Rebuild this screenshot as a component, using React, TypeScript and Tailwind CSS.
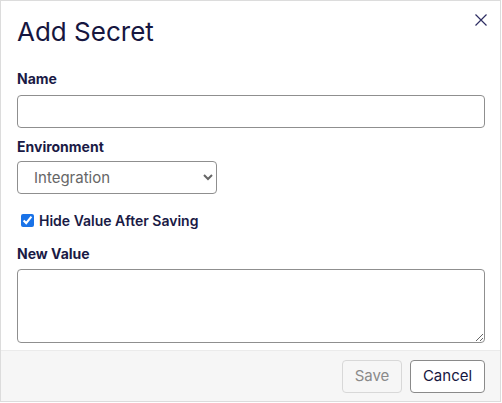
import React from "react";

export default function App() {
  return (
    <div className="w-[502px] h-[403px] bg-white" style={{ fontFamily: "Inter, 'Noto Sans', sans-serif" }}>
      <div className="w-[501px] h-[402px] border border-[#dcdcdc] flex flex-col text-[#1a1a45]">
        <div className="flex-1 px-4 pt-[13px] relative">
          <h1 className="text-[26px] leading-[36px] font-normal text-[#16163f]">Add Secret</h1>
          <button className="absolute right-[13px] top-[13px] w-[12px] h-[12px] text-[#2e2e63]" aria-label="Close">
            <svg width="12" height="12" viewBox="0 0 12 12" fill="none" stroke="currentColor" strokeWidth="1.2">
              <path d="M0.5 0.5 L11.5 11.5 M11.5 0.5 L0.5 11.5" />
            </svg>
          </button>

          <label className="block mt-[19px] text-[14px] leading-[20px] font-bold">Name</label>
          <input className="block mt-[6px] w-[468px] h-[33px] border border-[#8f8f8f] rounded-[4px] px-3 text-[15px] outline-none" />

          <label className="block mt-[9px] text-[14px] leading-[20px] font-bold">Environment</label>
          <select
            defaultValue="Integration"
            className="block mt-[4px] w-[200px] h-[33px] border border-[#8f8f8f] rounded-[4px] pl-[12px] pr-2 text-[15px] text-[#666] bg-white outline-none"
          >
            <option>Integration</option>
          </select>

          <div className="flex items-center mt-[16px] h-[20px]">
            <input type="checkbox" defaultChecked className="ml-[4px] mr-[5px] w-[13px] h-[13px] accent-[#1a73e8]" />
            <span className="text-[14px] font-semibold">Hide Value After Saving</span>
          </div>

          <label className="block mt-[14px] text-[14px] leading-[20px] font-bold">New Value</label>
          <textarea className="block mt-[5px] w-[468px] h-[74px] border border-[#8f8f8f] rounded-[4px] px-3 py-2 text-[15px] outline-none" />
        </div>
        <div className="h-[51px] bg-[#f6f6f6] border-t border-[#ebebeb] flex items-center justify-end gap-[8px] pr-[15px] pt-[1px]">
          <button disabled className="w-[60px] h-[33px] border border-[#d8d8d8] rounded-[4px] text-[15px] text-[#8a8a8a] bg-[#f6f6f6]">
            Save
          </button>
          <button className="w-[75px] h-[33px] border border-[#8a8a8a] rounded-[4px] text-[15px] text-[#16163f] bg-white">
            Cancel
          </button>
        </div>
      </div>
    </div>
  );
}
